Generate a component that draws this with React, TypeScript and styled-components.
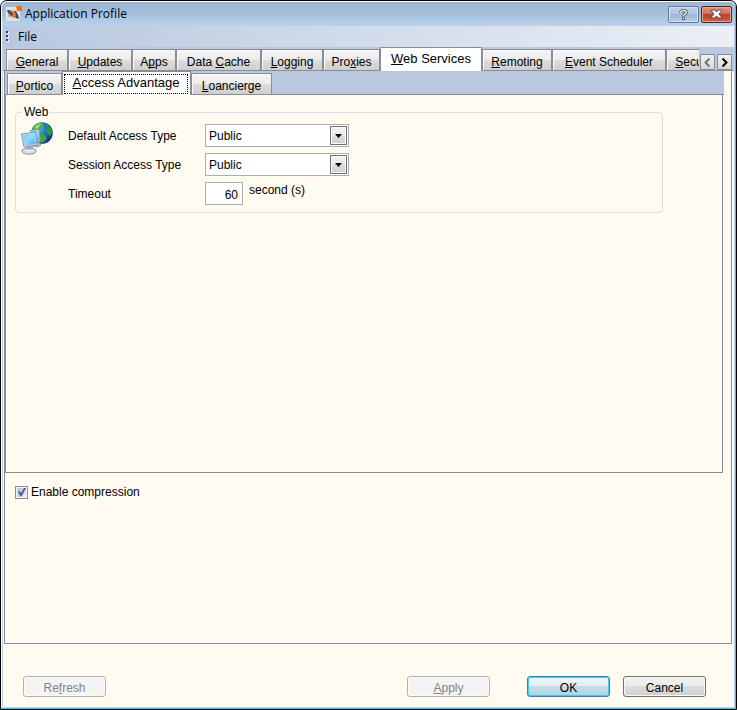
import React, { useState } from "react";
import styled, { createGlobalStyle, css } from "styled-components";

const cream = "#fffbf0";
const line = "#898c95";
const strip = "#b9c8df";

const GlobalStyle = createGlobalStyle`
  *, *::before, *::after { box-sizing: border-box; }
  body { margin: 0; background: #fff; }
  button, input, select, fieldset, legend { font: inherit; color: inherit; }
`;

const Window = styled.div`
  display: flex;
  flex-direction: column;
  min-height: 100vh;
  padding: 1px;
  border: 1px solid #000;
  border-radius: 7px 7px 0 0;
  background: #fff;
  box-shadow: inset -1px -1px 0 #35c5ee;
  font-family: "Liberation Sans", Arial, sans-serif;
  font-size: 12px;
  line-height: 14px;
  color: #000;
`;

const TitleBar = styled.header`
  display: flex;
  align-items: center;
  height: 24px;
  padding: 0 3px 0 4px;
  border-radius: 5px 5px 0 0;
  background: linear-gradient(#9bb5d1, #a4bfdb 45%, #b9d1ec);
`;

const Title = styled.h1`
  flex: 1;
  margin: 0 0 0 3px;
  font: 400 12px/16px "Open Sans", "Noto Sans", sans-serif;
`;

const Caption = styled.button<{ $close?: boolean }>`
  display: grid;
  place-items: center;
  width: 31px;
  height: 17px;
  margin-left: 2px;
  padding: 0;
  border: 1px solid ${(p) => (p.$close ? "#5b2020" : "#627a9d")};
  border-radius: 2px;
  box-shadow: inset 0 0 0 1px ${(p) => (p.$close ? "#e5a498" : "#d3e1f2")};
  background: ${(p) =>
    p.$close
      ? "linear-gradient(#dd9587, #cf6f5c 45%, #b83a24 46%, #cf6448)"
      : "linear-gradient(#bfd0e6, #b2c7e0 45%, #9bb5d4 46%, #b6cce5)"};
`;

const Body = styled.main`
  display: flex;
  flex: 1;
  flex-direction: column;
  border: solid #b9d1ec;
  border-width: 0 1px 1px;
  background: ${cream};
`;

const MenuBar = styled.nav`
  display: flex;
  align-items: center;
  height: 21px;
  padding-left: 3px;
  background: linear-gradient(to right, #b9c8df, #ebeff5);
  font: 400 12px/16px "Open Sans", "Noto Sans", sans-serif;
`;

const MenuItem = styled.button`
  margin-left: 3px;
  padding: 0 6px;
  border: 0;
  background: none;
`;

const TabStrip = styled.div`
  display: flex;
  align-items: flex-end;
  height: 24px;
  padding-left: 3px;
  background: linear-gradient(${strip} 23px, ${line} 23px);
`;

const TabList = styled.div`
  display: flex;
  flex: 1;
  align-items: flex-end;
  min-width: 0;
  overflow: hidden;
`;

const Tab = styled.button<{ $w: number }>`
  flex: none;
  width: ${(p) => p.$w}px;
  height: 22px;
  padding: 4px 0 0;
  border: 1px solid ${line};
  background: linear-gradient(#f3f3f3, #ececec 48%, #dddddd 50%, #cfcfcf);
  box-shadow: inset 1px 1px 0 #fafafa;
  white-space: nowrap;

  &[aria-selected="true"] {
    height: 24px;
    padding: 0 0 1px;
    border-bottom: 0;
    background: #fff;
    box-shadow: none;
    font-size: 13px;
    line-height: 16px;
  }
`;

const FocusFrame = styled.span`
  display: block;
  height: 20px;
  margin: 2px 2px 0 1px;
  border: 1px dotted #000;
`;

const Scrollers = styled.div`
  display: flex;
  gap: 2px;
  padding: 0 2px 1px 1px;
`;

const Scroller = styled.button`
  display: grid;
  place-items: center;
  width: 15px;
  height: 16px;
  padding: 0;
  border: 1px solid #8b8b8b;
  border-radius: 1px;
  background: linear-gradient(#f0f0f0, #e6e6e6 50%, #d6d6d6);
`;

const OuterPage = styled.section`
  display: flex;
  flex: 1;
  flex-direction: column;
  margin: 0 2px 0 1px;
  border: 1px solid ${line};
  border-top: 0;
  box-shadow: 1px 1px 0 #fff;
`;

const InnerTabs = styled.div`
  margin-right: 7px;
`;

const InnerStrip = styled(TabStrip)`
  padding-left: 2px;
`;

const InnerPage = styled.section`
  min-height: 378px;
  margin-right: 1px;
  padding: 10px 59px 10px 9px;
  border: 1px solid ${line};
  border-top: 0;
  box-shadow: 1px 1px 0 #fff;
`;

const Group = styled.fieldset`
  display: grid;
  grid-template-columns: 47px 1fr;
  min-width: 0;
  margin: 0;
  padding: 3px 0 7px 5px;
  border: 1px solid #d5dfe9;
  border-radius: 4px;
`;

const GroupTitle = styled.legend`
  margin-left: 1px;
  padding: 0 2px;
`;

const Fields = styled.div`
  display: grid;
  gap: 6px;
  padding-top: 2px;
`;

const Field = styled.div`
  display: grid;
  grid-template-columns: 137px auto 1fr;
  align-items: center;
  height: 23px;
`;

const Unit = styled.span`
  align-self: start;
  padding: 1px 0 0 6px;
`;

const Picker = styled.div`
  position: relative;
  width: 144px;
  height: 23px;
`;

const Select = styled.select`
  appearance: none;
  width: 100%;
  height: 100%;
  padding: 1px 22px 0 3px;
  border: 1px solid #abadb3;
  border-radius: 0;
  background: #fff;
`;

const PickerArrow = styled.span`
  position: absolute;
  top: 2px;
  right: 2px;
  display: grid;
  place-items: center;
  width: 17px;
  height: 19px;
  border: 1px solid #707070;
  background: linear-gradient(#f2f2f2, #ebebeb 49%, #dddddd 50%, #cfcfcf);
  box-shadow: inset 0 0 0 1px #fafafa;
  pointer-events: none;
`;

const NumberBox = styled.input`
  width: 38px;
  height: 23px;
  padding: 2px 4px 0 0;
  border: 1px solid #abadb3;
  background: #fff;
  text-align: right;
`;

const CheckRow = styled.label`
  display: flex;
  align-items: center;
  align-self: flex-start;
  gap: 3px;
  margin: 12px 0 0 10px;
`;

const CheckHolder = styled.span`
  display: grid;
  width: 13px;
  height: 13px;

  > * { grid-area: 1 / 1; }
  svg { pointer-events: none; z-index: 1; }
  input:not(:checked) + svg { visibility: hidden; }
`;

const CheckBox = styled.input`
  appearance: none;
  width: 13px;
  height: 13px;
  margin: 0;
  border: 1px solid #8e8f8f;
  background: linear-gradient(135deg, #b4bccb, #f3f4f6);
  box-shadow: inset 0 0 0 1px #f4f4f4;
`;

const Footer = styled.footer`
  display: flex;
  align-items: center;
  height: 63px;
  padding: 21px 28px 0 20px;
`;

const disabledLook = css`
  border-color: #adb2b5;
  background: #f4f4f4;
  box-shadow: inset 0 0 0 1px #fbfbfb;
  color: #838383;
`;
const primaryLook = css`
  border-color: #3c7fb1;
  background: linear-gradient(#eef5f9, #e2eef4 48%, #c6dde8 50%, #b3d0df);
  box-shadow: inset 0 0 0 1px #41cdf3;
`;

const PushButton = styled.button<{ $primary?: boolean; $gap?: number }>`
  width: 83px;
  height: 21px;
  margin-left: ${(p) => p.$gap ?? 0}px;
  padding: 3px 0 0;
  border: 1px solid #707070;
  border-radius: 3px;
  background: linear-gradient(#f2f2f2, #ebebeb 48%, #dddddd 50%, #cfcfcf);
  box-shadow: inset 0 0 0 1px #f8f8f8;
  ${(p) => p.$primary && primaryLook}
  &:disabled { ${disabledLook} }
`;

const Spacer = styled.div`
  flex: 1;
`;

const Key = styled.span`
  text-decoration: underline;
  text-decoration-skip-ink: none;
  text-underline-offset: 1px;
`;

/** Text with its keyboard accelerator underlined; "&" precedes the key. */
function Mnemonic({ text }: { text: string }) {
  const at = text.indexOf("&");
  if (at < 0) return <>{text}</>;
  return (
    <>
      {text.slice(0, at)}
      <Key>{text[at + 1]}</Key>
      {text.slice(at + 2)}
    </>
  );
}

function AppIcon() {
  return (
    <svg width="16" height="16" viewBox="0 0 16 16" aria-hidden="true">
      <path d="M0 1h14v14H0z" fill="#e4e2e1" />
      <path d="M1 4h3l3 3 0 4-2-1-3-3z" fill="#4a505b" />
      <path d="M2 8l3 2-1 2-2-2z" fill="#a8adb3" />
      <path d="M8 5h2l2 4 1 4-3-1-2-3z" fill="#3b414d" />
      <path d="M6 3l3 3 1 3-2 4-2-3 1-2z" fill="#f0782a" />
      <path d="M10 0h6v5h-5z" fill="#ff6a13" />
    </svg>
  );
}

function NetworkIcon() {
  return (
    <svg width="33" height="33" viewBox="0 0 33 33" aria-hidden="true">
      <defs>
        <radialGradient id="sea" cx="0.35" cy="0.3" r="0.8">
          <stop offset="0" stopColor="#64b4f2" />
          <stop offset="0.5" stopColor="#1f63c4" />
          <stop offset="1" stopColor="#0b2c78" />
        </radialGradient>
        <linearGradient id="screen" x1="0" y1="0" x2="1" y2="1">
          <stop offset="0" stopColor="#4cb4ef" />
          <stop offset="0.5" stopColor="#8edafa" />
          <stop offset="1" stopColor="#37a5e8" />
        </linearGradient>
      </defs>
      <circle cx="21" cy="11" r="10.800" fill="url(#sea)" />
      <path d="M12 6c2-4 5-5 9-5l2 2-3 2 1 3-4 2-2 3-4-1c0-3 0-4 1-6z" fill="#50b83c" />
      <path d="M24 2c4 1 7 5 7 9l-2 3-3-2-1-4 1-2z" fill="#2f9a35" />
      <path d="M19 12l5 1 2 3-3 4-3 1-2-4z" fill="#3fa835" />
      <path d="M14 5c2-2 4-3 6-3l-4 5z" fill="#a5e37a" />
      <path d="M12 21l6-1 2 3-3 2-5-1z" fill="#b3b8cc" stroke="#73799a" strokeWidth="0.7" />
      <path d="M9 8.500l9-1 1 12-7 1z" fill="#cfdcf0" stroke="#8a93b0" strokeWidth="0.8" />
      <path d="M10 9.500l7-1 1 10-5 1z" fill="url(#screen)" />
      <ellipse cx="8" cy="29" rx="7.2" ry="3.2" fill="#d9dbe7" stroke="#777c98" strokeWidth="0.8" />
      <path d="M6 24h6l-1 5H6z" fill="#a4a9c2" />
      <path d="M0.500 12l14-2 1.500 13-13 2z" fill="#d9e2f1" stroke="#7d88aa" strokeWidth="0.9" />
      <path d="M2 13l11.500-1.500 1.200 10.500-11 1.700z" fill="url(#screen)" />
      <path d="M2 13l11.500-1.500-9.500 8z" fill="#b7e7fb" opacity="0.4" />
      <path d="M4 28.500c2-1 5-1 8-0.500l-3 1.500z" fill="#fff" />
    </svg>
  );
}

const outerTabs: [string, number][] = [
  ["&General", 62],
  ["&Updates", 64],
  ["A&pps", 44],
  ["Data &Cache", 85],
  ["&Logging", 62],
  ["Pro&xies", 57],
  ["&Web Services", 102],
  ["&Remoting", 70],
  ["&Event Scheduler", 114],
  ["&Security", 62],
];

const innerTabs: [string, number][] = [
  ["&Portico", 55],
  ["&Access Advantage", 129],
  ["&Loancierge", 81],
];

function AccessField({ id, label }: { id: string; label: string }) {
  return (
    <Field>
      <label htmlFor={id}>{label}</label>
      <Picker>
        <Select id={id} defaultValue="Public">
          <option>Public</option>
        </Select>
        <PickerArrow>
          <svg width="7" height="4" viewBox="0 0 7 4" aria-hidden="true">
            <path d="M0 0h7L3.500 4z" />
          </svg>
        </PickerArrow>
      </Picker>
    </Field>
  );
}

export default function App() {
  const [outer, setOuter] = useState(6);
  const [inner, setInner] = useState(1);

  return (
    <>
      <GlobalStyle />
      <Window>
        <TitleBar>
          <AppIcon />
          <Title>Application Profile</Title>
          <Caption aria-label="Help">
            <svg width="9" height="11" viewBox="0 0 9 11" fill="none" aria-hidden="true">
              <path d="M1.500 3.500C1.500 1 7.500 1 7.500 3.500 7.500 5 4.500 5 4.500 7" stroke="#4c5569" strokeWidth="3" />
              <path d="M3 7.500h3V11H3z" fill="#4c5569" />
              <path d="M1.500 3.500C1.500 1 7.500 1 7.500 3.500 7.500 5 4.500 5 4.500 7M4.500 8.500V10" stroke="#fff" strokeWidth="1.300" />
            </svg>
          </Caption>
          <Caption $close aria-label="Close">
            <svg width="13" height="10" viewBox="0 0 13 10" aria-hidden="true">
              <path
                d="M1.500 1h3l2 2 2-2h3v1L9 5l2.500 3v1h-3l-2-2-2 2h-3V8L4 5 1.500 2z"
                fill="#fff"
                stroke="#4a4a5c"
              />
            </svg>
          </Caption>
        </TitleBar>
        <Body>
          <MenuBar>
            <svg width="3" height="11" viewBox="0 0 3 11" aria-hidden="true">
              <path d="M1 1h2v2H1zM1 5h2v2H1zM1 9h2v2H1z" fill="#fff" />
              <path d="M0 0h2v2H0zM0 4h2v2H0zM0 8h2v2H0z" fill="#27417b" />
            </svg>
            <MenuItem>File</MenuItem>
          </MenuBar>
          <TabStrip>
            <TabList role="tablist" aria-label="Profile sections">
              {outerTabs.map(([text, w], i) => (
                <Tab key={text} role="tab" $w={w} aria-selected={i === outer} onClick={() => setOuter(i)}>
                  <Mnemonic text={text} />
                </Tab>
              ))}
            </TabList>
            <Scrollers>
              <Scroller aria-label="Scroll left">
                <svg width="7" height="9" viewBox="0 0 7 9" fill="none" aria-hidden="true">
                  <path d="M5.500 0.500l-4 4 4 4" stroke="#6d6d6d" strokeWidth="1.800" />
                </svg>
              </Scroller>
              <Scroller aria-label="Scroll right">
                <svg width="7" height="9" viewBox="0 0 7 9" fill="none" aria-hidden="true">
                  <path d="M1.500 0.500l4 4-4 4" stroke="#000" strokeWidth="2" />
                </svg>
              </Scroller>
            </Scrollers>
          </TabStrip>
          <OuterPage>
            <InnerTabs>
              <InnerStrip>
                <TabList role="tablist" aria-label="Web services">
                  {innerTabs.map(([text, w], i) => (
                    <Tab key={text} role="tab" $w={w} aria-selected={i === inner} onClick={() => setInner(i)}>
                      {i === inner ? (
                        <FocusFrame>
                          <Mnemonic text={text} />
                        </FocusFrame>
                      ) : (
                        <Mnemonic text={text} />
                      )}
                    </Tab>
                  ))}
                </TabList>
              </InnerStrip>
              <InnerPage>
                <Group>
                  <GroupTitle>Web</GroupTitle>
                  <NetworkIcon />
                  <Fields>
                    <AccessField id="default-access" label="Default Access Type" />
                    <AccessField id="session-access" label="Session Access Type" />
                    <Field>
                      <label htmlFor="timeout">Timeout</label>
                      <NumberBox id="timeout" defaultValue="60" inputMode="numeric" />
                      <Unit>second (s)</Unit>
                    </Field>
                  </Fields>
                </Group>
              </InnerPage>
            </InnerTabs>
            <CheckRow>
              <CheckHolder>
                <CheckBox type="checkbox" defaultChecked />
                <svg width="13" height="13" viewBox="0 0 13 13" aria-hidden="true">
                  <path d="M3 6l2-1 1 2.500L9 2h2L6.500 10.500h-1z" fill="#42599c" />
                </svg>
              </CheckHolder>
              Enable compression
            </CheckRow>
          </OuterPage>
          <Footer>
            <PushButton disabled>
              <Mnemonic text="Re&fresh" />
            </PushButton>
            <Spacer />
            <PushButton disabled>
              <Mnemonic text="&Apply" />
            </PushButton>
            <PushButton $primary $gap={37}>
              OK
            </PushButton>
            <PushButton $gap={13}>Cancel</PushButton>
          </Footer>
        </Body>
      </Window>
    </>
  );
}
